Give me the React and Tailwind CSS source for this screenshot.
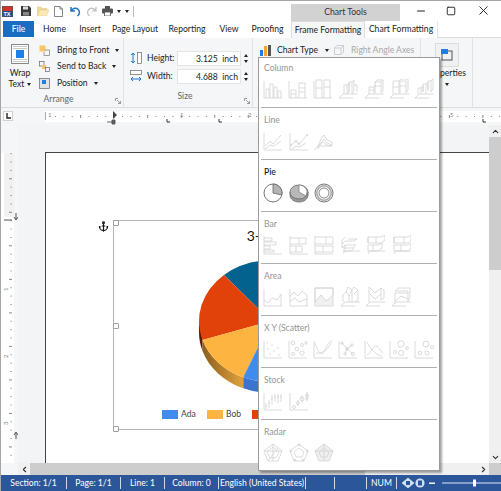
import React from "react";
import { Anchor, ChevronLeft, ChevronRight, ChevronUp, ChevronDown, Minus, Square, X } from "lucide-react";

const c = (x, y, r) => `M${x - r} ${y}a${r} ${r} 0 1 0 ${2 * r} 0a${r} ${r} 0 1 0 ${-2 * r} 0`;
const axis = "M1 2V19H19";
const axis3d = "M1 19L5 15H20M1 19H15";

const sections = [
  { name: "Column", icons: [
    [axis + "M3 19V10H6V19M7 19V5H10V19M11 19V8H14V19M15 19V12H18V19"],
    [axis + "M3 19V11H8V19M3 15H8M11 19V4H17V19M11 9H17M11 13H17"],
    [axis + "M3 19V1H9V19M3 9H9M11 19V1H17V19M11 8H17"],
    [axis3d + "M6 15V6H9V15M9 6L11 4V13L9 15M11 13V3H14V15M14 3L16 1V12L14 15M16 6H19V13"],
    [axis3d + "M5 15V8H10V15M5 11H10M11 14V3H17V14M11 7H17M10 8L12 6M17 3L19 1V12L17 14M11 3L13 1H19"],
    [axis3d + "M4 15V2H10V15M4 8H10M11 14V2H17V14M11 7H17M10 2L12 0H19V11L17 14"],
    [axis3d + "M4 15V9H7V15M7 9L9 7V13M9 13V5H12V15M12 5L14 3V12M14 10V2H17V13M17 2L19 0V10L17 13"],
  ]},
  { name: "Line", icons: [
    [axis + "M2 15L7 10L10 13L18 4M2 18L7 14L11 15L18 10"],
    [axis + "M2 14L7 10L10 13L18 4" + c(2, 14, 0.8) + c(7, 10, 0.8) + c(10, 13, 0.8) + c(18, 4, 0.8) + "M3 18L7 15L11 16L17 12"],
    ["M0 19L5 15H18M3 17L7 8L10 4L13 9L18 11V14L13 12L10 8L7 12L4 18M5 14L9 11L13 14L18 15"],
  ]},
  { name: "Pie", active: true, icons: [] },
  { name: "Bar", icons: [
    ["M1 1V19H19M1 3H9V6H1M1 7H13V10H1M1 11H7V14H1M1 15H11V17H1"],
    ["M1 1V19H19M1 3H17V9H1M10 3V9M1 11H13V17H1M7 11V17"],
    ["M1 1V19H19M1 2H19V9H1M12 2V9M1 11H19V17H1M9 11V17"],
    ["M3 19L5 16H20M5 2L2 5V9L5 6H14L17 4H8M2 9V13L5 10H16L13 13H3M5 10V14L3 16H11L14 13"],
    ["M3 19L5 16H20M3 2H16L20 0V5L16 8H3ZM3 2V8M11 2V8M3 10H13L17 8V13L13 16H3ZM8 10V16"],
    ["M3 19L5 16H20M3 2H17L20 0V5L17 8H3ZM3 2V8M13 2V8M3 10H17L20 8V13L17 16H3ZM10 10V16"],
  ]},
  { name: "Area", icons: [
    [axis + "M1 13L5 16L9 11L14 13L18 7V19"],
    [axis + "M1 9L5 5L9 9L13 4L18 8V19M1 14L6 11L10 15L18 12"],
    ["M1 1H19V19H1ZM1 15L7 8L12 14L19 8V1H1Z", "#f0f0f0"],
    [axis3d + "M3 15V8L6 5L9 9V15M6 5L8 0L12 3L14 0L18 3V13L15 15M9 9L12 3M12 3V15M14 7L18 3"],
    [axis3d + "M4 15V0L10 6L16 1V13M4 6L10 12L16 7M16 1L19 3V11L16 13"],
    [axis3d + "M4 17V6H17V15M4 4L7 1H19V11L17 14M4 4H17V6M4 14L10 9L17 12"],
  ]},
  { name: "X Y (Scatter)", icons: [
    [axis + c(4, 4, 0.4) + c(9, 6, 0.4) + c(5, 10, 0.4) + c(11, 12, 0.4) + c(15, 9, 0.4) + c(7, 15, 0.4) + c(16, 16, 0.4)],
    [axis + c(5, 4, 1.8) + c(14, 6, 1.5) + c(9, 10, 1.8) + c(5, 15, 1.5) + c(14, 14, 2.2) + c(18, 4, 1.2)],
    [axis + "M2 4C5 14 9 18 12 11S16 3 19 2M3 14C8 15 14 12 18 4"],
    [axis + c(4, 4, 1.2) + c(9, 10, 1.4) + c(14, 6, 1.2) + c(7, 15, 1.2) + c(15, 15, 1.6) + "M4 4L9 10L14 6M9 10L7 15M9 10L15 15"],
    [axis + "M3 3C6 10 12 16 18 17M3 16C7 14 9 7 12 7S16 12 19 14"],
    [axis + c(12, 5, 3.2) + c(18, 9, 1.4) + c(6, 13, 1.6) + c(12, 14, 2.5)],
    [axis + c(12, 5, 3) + c(18, 8, 1.6) + c(6, 14, 1.8) + c(13, 14, 2)],
  ]},
  { name: "Stock", icons: [
    [axis + "M3 12V18M6 9V17M9 4V14M12 3V11M15 3V12M18 3V11M2 15H4M5 12H7M8 8H10M11 6H13M14 6H16M17 6H19"],
    [axis + c(5, 16, 1.5) + c(9, 12, 1.5) + c(13, 8, 2) + "M17 3H19V8H17Z" + "M9 9V15M13 4V12M18 1V10"],
  ]},
  { name: "Radar", icons: [
    ["M10 1L19 8L15 18H5L1 8ZM10 4L16 9L13 15H7L4 9ZM10 1V18M1 8L19 8M5 18L15 5"],
    ["M10 1L19 8L15 18H5L1 8ZM10 5L15 9L13 14H7L5 9Z" + c(10, 2, 1) + c(18, 8, 1) + c(14, 17, 1) + c(6, 17, 1) + c(2, 8, 1)],
    ["M10 1L19 8L15 18H5L1 8ZM10 5L15 9L13 14H7L5 9ZM10 1V18M1 8H19", "#f0f0f0"],
  ]},
];

function MenuIcon({ d, fill = "none", stroke = "#d2d2d2" }) {
  return (
    <svg viewBox="0 0 20 20" className="w-[20px] h-[20px] block">
      <path d={d} fill={fill} stroke={stroke} strokeWidth="0.8" />
    </svg>
  );
}

function PieIcons() {
  return (
    <>
      <svg viewBox="0 0 20 20" className="w-[20px] h-[20px] block">
        <circle cx="10" cy="10" r="9" fill="#fff" stroke="#666" strokeWidth="0.9" />
        <path d="M10 1A9 9 0 0 1 18.8 12L10 10Z" fill="#b4b4b4" stroke="#666" strokeWidth="0.8" />
      </svg>
      <svg viewBox="0 0 20 20" className="w-[20px] h-[20px] block">
        <path d="M1 9V12C1 16 5 19 10 19S19 16 19 12V9" fill="#999" stroke="#666" strokeWidth="0.8" />
        <ellipse cx="10" cy="9" rx="9" ry="7" fill="#b8b8b8" stroke="#666" strokeWidth="0.8" />
        <path d="M10 2V9L17 13L18 9C18 5 14 2 10 2Z" fill="#fff" stroke="#666" strokeWidth="0.6" />
      </svg>
      <svg viewBox="0 0 20 20" className="w-[20px] h-[20px] block">
        <circle cx="10" cy="10" r="9" fill="#fff" stroke="#666" strokeWidth="0.9" />
        <circle cx="10" cy="10" r="7.2" fill="none" stroke="#aaa" strokeWidth="1.6" />
        <circle cx="10" cy="10" r="5" fill="#fff" stroke="#666" strokeWidth="0.8" />
      </svg>
    </>
  );
}

function ChartMenu() {
  return (
    <div className="absolute left-[257px] top-[56px] w-[182px] h-[414px] bg-white border border-[#9a9a9a] shadow-[2px_2px_2px_rgba(0,0,0,0.35)] flex flex-col">
      {sections.map((s, i) => (
        <div key={s.name} className="flex flex-col">
          {i > 0 && <div className="h-px bg-[#b0b0b0] mx-[2px]" />}
          <div className={`flex flex-col pb-[8px] ${i === 0 ? "pt-[4px]" : "pt-[6px]"}`}>
            <div className={`h-[12px] leading-[12px] pl-[5px] ${s.active ? "text-[#111] font-medium" : "text-[#949494]"}`}>{s.name}</div>
            <div className="flex mt-[5px] pl-[4px] h-[20px]">
              {s.active ? (
                <div className="flex gap-[5.5px]"><PieIcons /></div>
              ) : (
                s.icons.map((ic, j) => (
                  <div key={j} className="w-[25.5px]">
                    <MenuIcon d={ic[0]} fill={ic[1]} />
                  </div>
                ))
              )}
            </div>
          </div>
        </div>
      ))}
    </div>
  );
}

function Caret({ className = "" }) {
  return <span className={`inline-block w-0 h-0 border-x-[2.5px] border-x-transparent border-t-[3px] border-t-[#222] ${className}`} />;
}

function TitleBar() {
  return (
    <div className="h-[20px] flex items-center relative shrink-0 bg-white">
      <svg viewBox="0 0 11 11" className="w-[11px] h-[11px] ml-[1px]">
        <rect width="11" height="5" fill="#c33" />
        <rect y="5" width="11" height="6" fill="#1d4f91" />
        <rect x="0.5" y="0.5" width="10" height="10" fill="none" stroke="#555" strokeWidth="0.6" />
        <text x="1.5" y="10" fontSize="5.5" fill="#fff" fontWeight="700" fontFamily="Liberation Sans">TX</text>
      </svg>
      <svg viewBox="0 0 10 10" className="w-[10px] h-[10px] ml-[8px]">
        <path d="M0 0H8L10 2V10H0Z" fill="#3a3a3a" />
        <rect x="2" y="0.5" width="5" height="3" fill="#ddd" />
        <rect x="2" y="6" width="6" height="3.5" fill="#888" />
      </svg>
      <svg viewBox="0 0 12 10" className="w-[12px] h-[10px] ml-[6px]">
        <path d="M0 1H4L5 2.5H10V4H3L0 10Z" fill="#f1d99a" stroke="#e5c680" strokeWidth="0.5" />
        <path d="M0.5 10L3 4H12L9.5 10Z" fill="#fbe9b7" stroke="#e5c680" strokeWidth="0.5" />
      </svg>
      <svg viewBox="0 0 9 11" className="w-[9px] h-[11px] ml-[5px]">
        <path d="M0.5 0.5H6L8.5 3V10.5H0.5ZM6 0.5V3H8.5" fill="#fff" stroke="#555" strokeWidth="0.7" />
      </svg>
      <svg viewBox="0 0 11 11" className="w-[11px] h-[11px] ml-[7px]">
        <path d="M1 1V5H5M1.4 4.6C3 2 6 1.5 8 3.2S10 8 7.5 10" fill="none" stroke="#1a74c9" strokeWidth="1.5" />
      </svg>
      <svg viewBox="0 0 11 11" className="w-[11px] h-[11px] ml-[5px]">
        <path d="M10 1V5H6M9.6 4.6C8 2 5 1.5 3 3.2S1 8 3.5 10" fill="none" stroke="#bdbdbd" strokeWidth="1.2" />
      </svg>
      <svg viewBox="0 0 11 10" className="w-[11px] h-[10px] ml-[5px]">
        <rect x="3" y="0" width="5" height="3" fill="#555" />
        <rect x="0" y="2.5" width="11" height="5" rx="1" fill="#555" />
        <rect x="2.5" y="6" width="6" height="4" fill="#fff" stroke="#555" strokeWidth="0.8" />
      </svg>
      <Caret className="ml-[4px]" />
      <Caret className="ml-[4px]" />
      <div className="w-px h-[11px] bg-[#bbb] ml-[4px]" />
      <div className="ml-auto flex items-start self-end h-[17px]">
        <div className="w-[109px] h-[17px] bg-[#d2d2d2] text-center leading-[17px] text-[#333] mr-[6px]">Chart Tools</div>
        <div className="w-[30px] h-[13px] flex items-center justify-center"><Minus size={12} strokeWidth={2} color="#222" /></div>
        <div className="w-[30px] h-[13px] flex items-center justify-center"><Square size={10} strokeWidth={2.2} color="#222" /></div>
        <div className="w-[35px] h-[13px] flex items-center justify-center"><X size={15} strokeWidth={1.5} color="#222" /></div>
      </div>
    </div>
  );
}

const tabs = [
  ["Home", "w-[41px]"], ["Insert", "w-[30px]"], ["Page Layout", "w-[60px]"], ["Reporting", "w-[44px]"], ["View", "w-[40px]"], ["Proofing", "w-[37px]"],
];

function TabRow() {
  return (
    <div className="h-[17px] flex shrink-0 bg-white text-[#222] leading-[16px] text-center whitespace-nowrap">
      <div className="w-[31px] ml-[2px] h-[16px] bg-[#1a6ec2] text-white font-medium">File</div>
      {tabs.map(([t, w]) => (
        <div key={t} className={`${w} flex justify-center`}>{t}</div>
      ))}
      <div className="w-[74px] ml-[5px] bg-[#f5f6f7] border-x border-t border-[#dcdcdc] flex justify-center">Frame Formatting</div>
      <div className="w-[73px] flex justify-center border-r border-[#e6e6e6]">Chart Formatting</div>
      <div className="flex-1 border-b border-[#dcdcdc]" />
    </div>
  );
}

function Launcher() {
  return (
    <svg viewBox="0 0 6 6" className="absolute right-[2px] bottom-[3px] w-[6px] h-[6px]">
      <path d="M0.5 3V0.5H3M2 2L5.5 5.5M5.5 3V5.5H3" fill="none" stroke="#777" strokeWidth="0.7" />
    </svg>
  );
}

function ArrangeRow({ icon, label }) {
  return (
    <div className="flex items-center h-[16.5px]">
      {icon}
      <span className="ml-[7px] whitespace-nowrap">{label}</span>
      <Caret className="ml-[6px]" />
    </div>
  );
}

function Field({ label, value, icon }) {
  return (
    <div className="flex items-center h-[18px]">
      {icon}
      <span className="w-[30px] ml-[5px]">{label}</span>
      <div className="w-[64px] h-[15px] bg-white border border-[#e4e4e4] text-right pr-[2px] leading-[14px] whitespace-nowrap">{value}</div>
      <div className="w-[10px] h-[15px] flex flex-col items-center justify-center gap-[3px]">
        <span className="w-0 h-0 border-x-[2px] border-x-transparent border-b-[3px] border-b-[#222]" />
        <Caret />
      </div>
    </div>
  );
}

function Ribbon() {
  return (
    <div className="h-[70px] flex shrink-0 bg-[#f5f6f7] border-b border-[#dddddd] text-[#222]">
      <div className="w-[123px] relative border-r border-[#e2e2e2] flex flex-col">
        <div className="flex flex-1">
          <div className="w-[38px] flex flex-col items-center pt-[6px] leading-[10px]">
            <svg viewBox="0 0 18 20" className="w-[18px] h-[20px]">
              <rect x="0.5" y="0.5" width="17" height="19" fill="#fff" stroke="#888" />
              <path d="M2 2.5H16M2 4.5H16M2 15.5H16M2 17.5H16" stroke="#bbb" strokeWidth="0.8" />
              <rect x="5" y="6" width="8" height="8" fill="#1c7fe8" />
            </svg>
            <div className="mt-[4px]">Wrap</div>
            <div className="flex items-center mt-[1px]">Text<Caret className="ml-[3px]" /></div>
          </div>
          <div className="flex flex-col pt-[4px]">
            <ArrangeRow label="Bring to Front" icon={
              <svg viewBox="0 0 11 11" className="w-[11px] h-[11px]"><rect x="0.5" y="0.5" width="6" height="6" fill="#f4c668" /><path d="M6 5H10.5V10.5H5V7" fill="none" stroke="#777" strokeWidth="0.7" /></svg>
            } />
            <ArrangeRow label="Send to Back" icon={
              <svg viewBox="0 0 11 11" className="w-[11px] h-[11px]"><rect x="0.5" y="0.5" width="4.5" height="4.5" fill="none" stroke="#666" strokeWidth="0.7" /><rect x="3" y="4" width="4" height="4" fill="#f4c668" /><rect x="6.5" y="6.5" width="4" height="4" fill="none" stroke="#666" strokeWidth="0.7" /></svg>
            } />
            <ArrangeRow label="Position" icon={
              <svg viewBox="0 0 11 11" className="w-[11px] h-[11px]"><rect x="0.5" y="0.5" width="10" height="10" fill="#e2e2e2" stroke="#666" strokeWidth="0.7" /><rect x="3" y="2" width="4" height="4" fill="#1c7fe8" /></svg>
            } />
          </div>
        </div>
        <div className="h-[18px] text-center text-[#666] leading-[14px] pr-[7px]">Arrange</div>
        <Launcher />
      </div>
      <div className="w-[129px] relative border-r border-[#e2e2e2] flex flex-col pl-[6px]">
        <div className="flex-1 flex flex-col pt-[11px]">
          <Field label="Height:" value={"3.125\u00a0\u00a0inch"} icon={
            <svg viewBox="0 0 12 12" className="w-[12px] h-[12px]"><rect x="7.5" y="0.5" width="4" height="11" fill="#fff" stroke="#666" strokeWidth="0.7" /><path d="M3 1V11M1 3L3 1L5 3M1 9L3 11L5 9" fill="none" stroke="#1a74c9" strokeWidth="1" /></svg>
          } />
          <Field label="Width:" value={"4.688\u00a0\u00a0inch"} icon={
            <svg viewBox="0 0 12 12" className="w-[12px] h-[12px]"><rect x="0.5" y="0.5" width="11" height="4" fill="#fff" stroke="#666" strokeWidth="0.7" /><path d="M1 9H11M3 7L1 9L3 11M9 7L11 9L9 11" fill="none" stroke="#1a74c9" strokeWidth="1" /></svg>
          } />
        </div>
        <div className="h-[18px] text-center text-[#666] leading-[14px] pr-[12px]">Size</div>
        <Launcher />
      </div>
      <div className="w-[168px] border-r border-[#e2e2e2] flex items-start pt-[6px] pl-[7px]">
        <div className="flex items-center h-[12px]">
          <svg viewBox="0 0 11 11" className="w-[11px] h-[11px]"><rect x="0" y="5" width="3" height="6" fill="#1c7fe8" /><rect x="4" y="1" width="3" height="10" fill="#f4a52c" /><rect x="8" y="0" width="3" height="11" fill="#555" /></svg>
          <span className="ml-[6px] w-[40px] whitespace-nowrap">Chart Type</span>
          <Caret className="ml-[8px]" />
          <svg viewBox="0 0 10 10" className="w-[10px] h-[10px] ml-[5px]"><path d="M0.5 3H7V9.5H0.5ZM0.5 3L3 0.5H9.5V7L7 9.5M7 3L9.5 0.5" fill="none" stroke="#c4c4c4" strokeWidth="0.8" /></svg>
          <span className="ml-[7px] text-[#a8a8a8] whitespace-nowrap">Right Angle Axes</span>
        </div>
      </div>
      <div className="w-[52px] border-r border-[#e2e2e2] flex flex-col items-center pt-[5px] leading-[10px]">
        <div className="w-[24px] h-[24px] border border-[#dddddd] bg-[#f0f1f2] flex items-center justify-center">
          <svg viewBox="0 0 12 12" className="w-[12px] h-[12px]"><rect x="1" y="2" width="10" height="9" fill="none" stroke="#555" /><rect x="0" y="0" width="7" height="5" fill="#1c7fe8" /></svg>
        </div>
        <div className="mt-[1px] text-center w-full">Properties</div>
        <Caret className="mt-[5px]" />
      </div>
      <div className="w-[28px]" />
    </div>
  );
}

function HRuler() {
  const ticks = [];
  for (let x = 55; x < 500; x += 8.38) ticks.push(x);
  const nums = [[48, "1"], [180, "1"], [248, "2"], [315, "3"], [382, "4"], [450, "5"]];
  return (
    <div className="h-[17px] flex shrink-0 bg-[#f5f6f7]">
      <div className="w-[17px] flex items-start pt-[3px] pl-[2px]">
        <div className="w-[10px] h-[10px] bg-white border border-[#d0d0d0] flex items-center justify-center">
          <svg viewBox="0 0 6 6" className="w-[6px] h-[6px]"><path d="M2 0V5H6" fill="none" stroke="#222" strokeWidth="1.4" /></svg>
        </div>
      </div>
      <svg viewBox="18 0 483 17" className="flex-1 h-[17px] block">
        <rect x="45" y="3" width="456" height="11" fill="#fff" />
        {ticks.map((x, i) => (
          <rect key={i} x={x} y={i % 4 === 3 ? 7 : 8} width="1" height={i % 4 === 3 ? 3 : 1} fill="#888" />
        ))}
        {nums.map(([x, n]) => (
          <text key={x} x={x} y="9" fontSize="6" fill="#888" fontFamily="Lato">{n}</text>
        ))}
        <rect x="45" y="4" width="1" height="8" fill="#aaa" />
        <path d="M113 3L117 7L113 11Z" fill="#444" />
        <path d="M107 14H115M112 12H115V16H112Z" stroke="#444" strokeWidth="0.8" fill="#777" />
        <path d="M167 11V14H170M219 11V14H222M483 11V14H486" fill="none" stroke="#333" strokeWidth="1" />
      </svg>
    </div>
  );
}

function VRuler() {
  const ticks = [];
  for (let y = 3; y < 340; y += 8.38) ticks.push(y);
  return (
    <div className="w-[17px] shrink-0 bg-[#f5f6f7]">
      <svg viewBox="1 0 17 338" className="w-[17px] h-[338px] block">
        <rect x="1" y="28" width="13" height="310" fill="#fff" />
        <rect x="4" y="28" width="10" height="64" fill="#f1f1f1" />
        {ticks.filter((y) => y > 27).map((y, i) => (
          <rect key={i} x={i % 4 === 3 ? 9 : 10.5} y={y} width={i % 4 === 3 ? 3 : 1.2} height="1" fill="#888" />
        ))}
        <text x="0" y="0" fontSize="6" fill="#888" transform="translate(8 166) rotate(-90)" fontFamily="Lato">1</text>
        <text x="0" y="0" fontSize="6" fill="#888" transform="translate(8 233) rotate(-90)" fontFamily="Lato">2</text>
        <text x="0" y="0" fontSize="6" fill="#888" transform="translate(8 300) rotate(-90)" fontFamily="Lato">3</text>
        <path d="M16 88V94M14 92L16 95L18 92M4 95H12" fill="none" stroke="#555" strokeWidth="1" />
        <path d="M16 308V314M14 310L16 307L18 310" fill="none" stroke="#555" strokeWidth="1" />
      </svg>
    </div>
  );
}

function Handle({ className }) {
  return <div className={`absolute w-[6px] h-[6px] bg-white border border-[#a0a0a0] rounded-[1px] ${className}`} />;
}

function PieChart() {
  return (
    <svg viewBox="0 0 312 140" className="w-[312px] h-[140px] block">
      <defs>
        <linearGradient id="o" x1="0" x2="1" y1="0" y2="0">
          <stop offset="0" stopColor="#8b5f1f" />
          <stop offset="1" stopColor="#e0a23c" />
        </linearGradient>
      </defs>
      <path d="M85 66V77A72 61 0 0 0 88.5 96V85Z" fill="#5e1c06" />
      <path d="M88.5 84.9A72 61 0 0 0 129.3 122.3V133.3A72 61 0 0 1 88.5 95.9Z" fill="url(#o)" />
      <path d="M129.3 122.3A72 61 0 0 0 229 66V77A72 61 0 0 1 129.3 133.3Z" fill="#3b74cc" />
      <path d="M157 66L109.9 19.9A72 61 0 0 1 229 66Z" fill="#04628f" />
      <path d="M157 66L88.5 84.9A72 61 0 0 1 109.9 19.9Z" fill="#e14209" />
      <path d="M157 66L129.3 122.3A72 61 0 0 1 88.5 84.9Z" fill="#feb440" />
      <path d="M157 66L229 66A72 61 0 0 1 129.3 122.3Z" fill="#3f8bee" />
    </svg>
  );
}

function ChartFrame() {
  return (
    <div className="relative w-[314px] h-[210px] border border-[#b4b4b4] bg-white">
      <Anchor size={11} strokeWidth={2.5} color="#111" className="absolute left-[-16px] top-[0px]" />
      <Handle className="left-[-1px] top-[-1px]" />
      <Handle className="left-[-1px] top-[102px]" />
      <Handle className="left-[-1px] top-[205px]" />
      <div className="h-[34px] text-center text-[14px] leading-[30px] text-[#111]">3-D Pie</div>
      <PieChart />
      <div className="flex items-center mt-[14px] pl-[48px] text-[#444] leading-[10px]">
        <span className="w-[16px] h-[9px] bg-[#3f8bee] mr-[3px]" />
        <span className="w-[26px]">Ada</span>
        <span className="w-[16px] h-[9px] bg-[#feb440] mr-[3px]" />
        <span className="w-[26px]">Bob</span>
        <span className="w-[16px] h-[9px] bg-[#e14209] mr-[3px]" />
        <span>Cara</span>
      </div>
    </div>
  );
}

function Workspace() {
  return (
    <div className="flex-1 min-h-0 flex overflow-hidden">
      <VRuler />
      <div className="flex-1 min-w-0 bg-[#f3f4f6] pt-[27px] pl-[27px] overflow-hidden">
        <div className="h-[400px] bg-white border-t border-l border-[#444] pt-[67px] pl-[67px]">
          <ChartFrame />
        </div>
      </div>
      <div className="w-[12px] shrink-0 bg-[#f0f0f0] flex flex-col">
        <div className="h-[12px] flex items-center justify-center"><ChevronUp size={9} strokeWidth={3} color="#333" /></div>
        <div className="h-[133px] bg-[#cdcdcd]" />
        <div className="flex-1" />
        <div className="h-[12px] flex items-center justify-center"><ChevronDown size={9} strokeWidth={3} color="#333" /></div>
      </div>
    </div>
  );
}

function HScroll() {
  return (
    <div className="h-[12px] flex shrink-0 bg-[#f0f0f0]">
      <div className="w-[17px] bg-[#f5f6f7]" />
      <div className="w-[12px] flex items-center justify-center"><ChevronLeft size={9} strokeWidth={3} color="#333" /></div>
      <div className="w-[335px] bg-[#cdcdcd]" />
      <div className="flex-1 flex items-center justify-end pr-[1px]"><ChevronRight size={9} strokeWidth={3} color="#333" /></div>
      <div className="w-[12px] bg-[#cdcdcd]" />
    </div>
  );
}

const statusItems = [
  ["Section: 1/1", "w-[66px]"], ["Page: 1/1", "w-[54px]"], ["Line: 1", "w-[44px]"], ["Column: 0", "w-[54px]"], ["English (United States)", "w-[87px]"], ["", "w-[29px]"], ["", "w-[32px]"], ["NUM", "w-[30px]"],
];

function StatusBar() {
  return (
    <div className="h-[16px] flex items-center shrink-0 bg-[#2b579a] text-white whitespace-nowrap">
      {statusItems.map(([t, w], i) => (
        <div key={i} className={`${w} flex justify-center h-[12px] leading-[12px] border-r border-[#cfd9ea] overflow-hidden`}>{t}</div>
      ))}
      <svg viewBox="0 0 104 16" className="w-[104px] h-[16px] block">
        <path d="M11 3L17 8L11 13L5 8Z" fill="#cfe0f5" stroke="#fff" strokeWidth="0.5" />
        <rect x="9" y="6" width="4" height="4" fill="#2b579a" />
        <circle cx="23" cy="8" r="4.6" fill="#cfe0f5" />
        <rect x="21" y="5.5" width="4" height="5" fill="#2b579a" />
        <rect x="32" y="7.5" width="6" height="1.4" fill="#fff" />
        <rect x="45" y="7.5" width="59" height="1" fill="#dfe8f5" />
        <rect x="76" y="4.5" width="3" height="7" fill="#fff" />
      </svg>
    </div>
  );
}

export default function App() {
  return (
    <div className="relative w-[501px] h-[491px] overflow-hidden flex flex-col bg-white border-t border-l border-[#a6a6a6] font-['Lato',sans-serif] text-[8.6px]">
      <TitleBar />
      <TabRow />
      <Ribbon />
      <HRuler />
      <Workspace />
      <HScroll />
      <StatusBar />
      <ChartMenu />
    </div>
  );
}
